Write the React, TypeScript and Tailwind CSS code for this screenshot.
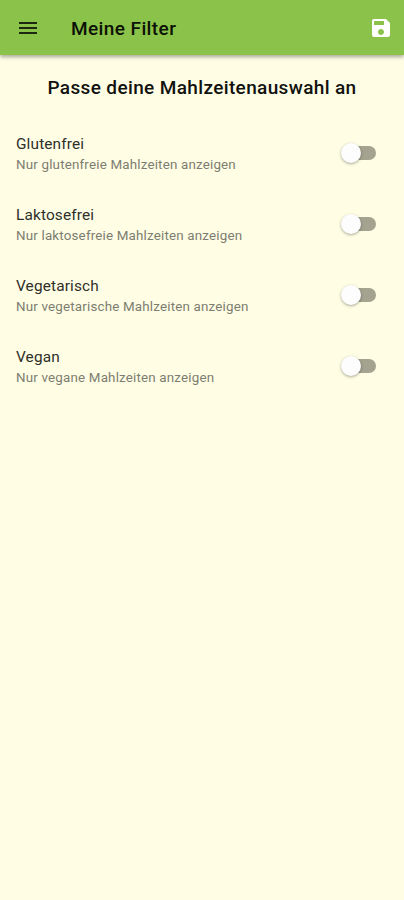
import React, { useState } from 'react';
import { MdMenu, MdSave } from 'react-icons/md';

interface FilterOption {
  id: string;
  title: string;
  subtitle: string;
}

const filterOptions: FilterOption[] = [
  { id: 'gluten', title: 'Glutenfrei', subtitle: 'Nur glutenfreie Mahlzeiten anzeigen' },
  { id: 'lactose', title: 'Laktosefrei', subtitle: 'Nur laktosefreie Mahlzeiten anzeigen' },
  { id: 'vegetarian', title: 'Vegetarisch', subtitle: 'Nur vegetarische Mahlzeiten anzeigen' },
  { id: 'vegan', title: 'Vegan', subtitle: 'Nur vegane Mahlzeiten anzeigen' },
];

const App: React.FC = () => {
  const [active, setActive] = useState<Record<string, boolean>>({});

  const toggle = (id: string) => setActive((prev) => ({ ...prev, [id]: !prev[id] }));

  return (
    <div className="w-full min-h-screen bg-[#fffee5] font-['Roboto',sans-serif]">
      <header className="relative flex h-[55px] items-center bg-[#8bc34a] pl-4 pr-[11px] pt-px shadow-[0_2px_4px_rgba(0,0,0,0.35)]">
        <button aria-label="Menü">
          <MdMenu className="h-6 w-6 text-[#1c270f]" />
        </button>
        <h1 className="ml-[31px] flex-1 pt-px text-[19px] leading-[26px] tracking-[0.4px] font-medium text-[#0c1106]">Meine Filter</h1>
        <button aria-label="Speichern">
          <MdSave className="h-6 w-6 text-white" />
        </button>
      </header>

      <h2 className="pt-[20px] text-center text-[19px] leading-[26px] tracking-[0.36px] font-medium text-[#11110f]">
        Passe deine Mahlzeitenauswahl an
      </h2>

      <ul className="pt-[16px]">
        {filterOptions.map((option) => (
          <li key={option.id} className="flex h-[71px] items-center justify-between pl-4 pr-[28px]">
            <div className="pt-[4px]">
              <p className="text-[15.4px] leading-[21px] tracking-[0.14px] text-[#2f2f2a]">{option.title}</p>
              <p className="text-[13.4px] leading-[20px] tracking-[0.17px] text-[#7d7d70]">{option.subtitle}</p>
            </div>
            <button
              role="switch"
              aria-checked={!!active[option.id]}
              aria-label={option.title}
              onClick={() => toggle(option.id)}
              className={`flex h-[14px] w-[33px] items-center rounded-full ${
                active[option.id] ? 'justify-end bg-[#c5e1a5]' : 'bg-[#a3a38f]'
              }`}
            >
              <span className="-ml-[2px] h-5 w-5 shrink-0 rounded-full bg-[#fdfdfd] shadow-[0_1px_3px_rgba(0,0,0,0.35)]" />
            </button>
          </li>
        ))}
      </ul>
    </div>
  );
};

export default App;
